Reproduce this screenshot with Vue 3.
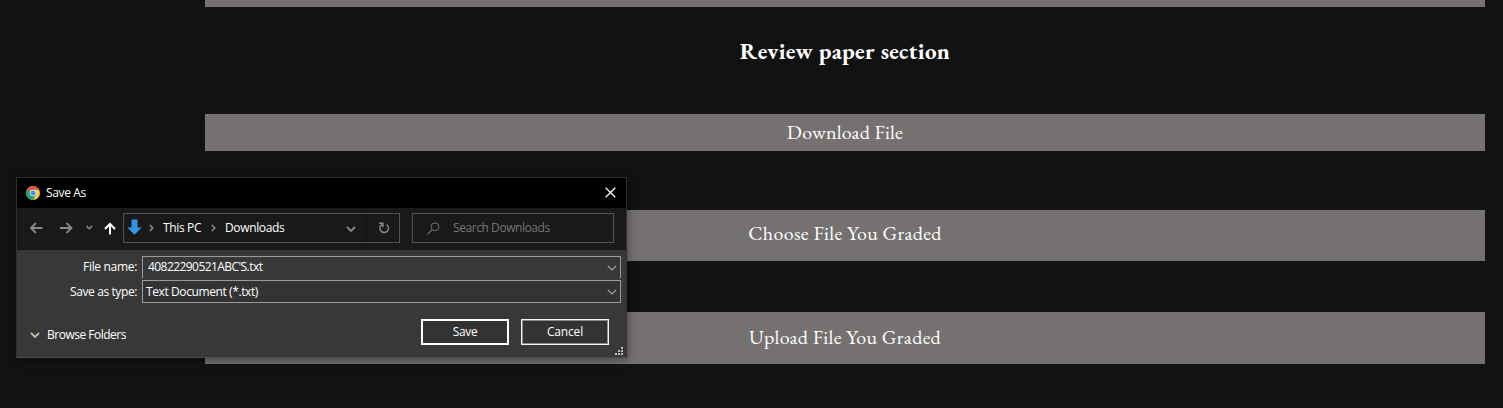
<script setup>
const crumbs = ['This PC', 'Downloads']
</script>

<template>
  <div class="page">
    <main class="column">
      <div class="bar top"></div>
      <h2 class="heading"><span>Review paper section</span></h2>
      <button class="bar download"><span>Download File</span></button>
      <button class="bar choose"><span>Choose File You Graded</span></button>
      <button class="bar upload"><span>Upload File You Graded</span></button>
    </main>

    <section class="dialog">
      <header class="titlebar">
        <svg class="chrome" width="14" height="14" viewBox="0 0 14 14">
          <circle cx="7" cy="7" r="7" fill="#f7ca45" />
          <path d="M7 7 .94 3.5A7 7 0 0 0 7 14l3-5.2z" fill="#1da462" />
          <path d="M7 7 .94 3.5A7 7 0 0 1 13.06 3.7H7z" fill="#dd5144" />
          <circle cx="7" cy="7" r="3.3" fill="#f1f1f1" />
          <circle cx="7" cy="7" r="2.6" fill="#4c8bf5" />
        </svg>
        <span class="title">Save As</span>
        <svg class="close" width="11" height="11" viewBox="0 0 11 11"><path d="M.7.7l9.6 9.6M10.3.7.7 10.3" stroke="#fff" stroke-width="1.3" /></svg>
      </header>

      <nav class="toolbar">
        <div class="arrows">
          <svg width="106" height="30" viewBox="0 0 106 30" fill="none">
            <path d="M14 15h11.5M19 10l-5 5 5 5" stroke="#8a8a8a" stroke-width="1.8" />
            <path d="M43 15h11.5M49.5 10l5 5-5 5" stroke="#8a8a8a" stroke-width="1.8" />
            <path d="M69.5 13l2.8 2.8 2.8-2.8" stroke="#777" stroke-width="1.8" />
            <path d="M93 21.5V11M88 16l5-5 5 5" stroke="#fff" stroke-width="2" />
          </svg>
        </div>
        <div class="address">
          <svg class="down" width="15" height="16" viewBox="0 0 15 16"><path d="M4.5.5h6v8h4.3L7.5 15.8.2 8.5h4.3z" fill="#3394e5" /></svg>
          <template v-for="(crumb, i) in crumbs" :key="crumb">
            <svg class="sep" width="5" height="8" viewBox="0 0 5 8" fill="none"><path d="M.8 1l3 3-3 3" stroke="#8c8c8c" stroke-width="1.6" /></svg>
            <span :class="['crumb', 'crumb-' + i]">{{ crumb }}</span>
          </template>
          <svg class="drop" width="10" height="7" viewBox="0 0 10 7" fill="none"><path d="M1 1l4 4 4-4" stroke="#888" stroke-width="1.9" /></svg>
          <div class="refresh">
            <svg width="12" height="12" viewBox="0 0 12 12" fill="none"><path d="M8.6 2.6A4.3 4.3 0 1 1 2.6 3.8L4.6 2M1 1.3h3.9v3.9" stroke="#858585" stroke-width="1.6" /></svg>
          </div>
        </div>
        <div class="search">
          <svg width="13" height="13" viewBox="0 0 13 13" fill="none"><circle cx="8" cy="4.8" r="3.9" stroke="#767676" /><path d="M5.2 7.6.5 12.3" stroke="#767676" stroke-width="1.2" /></svg>
          <span class="placeholder">Search Downloads</span>
        </div>
      </nav>

      <div class="body">
        <div class="row">
          <label><span class="l-name">File name:</span></label>
          <div class="field name"><span class="v-name">40822290521ABC'S.txt</span>
            <svg width="10" height="6" viewBox="0 0 10 6" fill="none"><path d="M.8.8 5 5 9.2.8" stroke="#aaa" stroke-width="1.2" /></svg>
          </div>
        </div>
        <div class="row second">
          <label><span class="l-type">Save as type:</span></label>
          <div class="field type"><span class="v-type">Text Document (*.txt)</span>
            <svg width="10" height="6" viewBox="0 0 10 6" fill="none"><path d="M.8.8 5 5 9.2.8" stroke="#aaa" stroke-width="1.2" /></svg>
          </div>
        </div>
        <footer class="actions">
          <div class="browse">
            <svg width="10" height="7" viewBox="0 0 10 7" fill="none"><path d="M1 1l4 4 4-4" stroke="#bbb" stroke-width="1.8" /></svg>
            <span class="b-text">Browse Folders</span>
          </div>
          <button class="btn save"><span>Save</span></button>
          <button class="btn cancel"><span>Cancel</span></button>
        </footer>
        <svg class="grip" width="8" height="8" viewBox="0 0 8 8" fill="#bdbdbd"><path d="M6 0h2v2H6zM3 3h2v2H3zM6 3h2v2H6zM0 6h2v2H0zM3 6h2v2H3zM6 6h2v2H6z" /></svg>
      </div>
    </section>
  </div>
</template>

<style>
html, body { background: #121212; overflow: hidden; }
</style>

<style scoped>
* { box-sizing: border-box; }
svg { flex-shrink: 0; }
.page { position: relative; height: 408px; overflow: hidden; background: #121212; color: #fff; }
.column { width: 1280px; margin-left: 205px; display: flex; flex-direction: column; font-family: "EB Garamond", Garamond, "Liberation Serif", serif; }
.bar { display: flex; align-items: center; justify-content: center; width: 100%; padding: 0; border: 0; background: #757170; color: #fff; font: inherit; font-size: 20px; line-height: 24px; letter-spacing: .37px; }
.top { height: 7px; }
.heading { margin: 0; height: 107px; padding-top: 30px; font-size: 23px; line-height: 28px; letter-spacing: .32px; text-align: center; white-space: nowrap; }
.bar span, .heading span { display: inline-block; }
.download { height: 37px; padding-bottom: 1px; letter-spacing: .25px; }
.choose { height: 51px; margin-top: 59px; padding-bottom: 5px; }
.upload { height: 52px; margin-top: 51px; padding-bottom: 2px; }

.dialog { position: absolute; left: 16px; top: 177px; width: 611px; height: 181px; display: flex; flex-direction: column; border: 1px solid #303030; border-bottom-color: #4a4a4a; background: #383838; box-shadow: 1px 2px 8px rgba(0, 0, 0, .4); font-family: "Open Sans", "Noto Sans", sans-serif; font-size: 12px; line-height: 16px; white-space: nowrap; }
.titlebar { height: 30px; display: flex; align-items: center; padding: 0 10px 1px 9px; background: #000; }
.title { margin-left: 6px; letter-spacing: -.35px; }
.close { margin-left: auto; }
.toolbar { height: 42px; display: flex; align-items: flex-start; padding-top: 5px; background: #191919; }
.arrows { width: 106px; height: 30px; }
.address { width: 277px; height: 30px; display: flex; align-items: center; border: 1px solid #535353; padding-left: 3px; }
.down { margin-bottom: 2px; }
.sep { margin-left: 7px; }
.crumb { margin-left: 9px; letter-spacing: -.35px; }
.crumb-0 { width: 41px; }
.drop { margin-left: auto; margin-right: 10px; margin-top: 2px; }
.refresh { width: 33px; height: 28px; display: flex; align-items: center; justify-content: center; border-left: 1px solid #111; padding-left: 1px; }
.search { margin-left: 12px; width: 202px; height: 30px; display: flex; align-items: center; padding-left: 14px; border: 1px solid #535353; color: #777; }
.placeholder { margin-left: 13px; letter-spacing: -.43px; }
.body { position: relative; flex: 1; padding-top: 6px; }
.row { display: flex; height: 22px; }
.second { margin-top: 2px; height: 23px; }
label { width: 125px; padding-right: 5px; text-align: right; line-height: 22px; letter-spacing: -.32px; }
.second label { line-height: 24px; letter-spacing: -.4px; }
.field { width: 479px; display: flex; align-items: center; justify-content: space-between; padding: 0 3px 0 5px; border: 1px solid #9b9b9b; background: #383838; }
.name { border-bottom: 0; }
.v-name { letter-spacing: -.56px; margin-bottom: 1px; }
.v-type { letter-spacing: -.4px; }
.type { padding-left: 3px; background: #333; }
.actions { display: flex; margin-top: 16px; height: 26px; }
.browse { width: 404px; display: flex; align-items: center; padding: 6px 0 0 13px; }
.b-text { margin-left: 7px; letter-spacing: -.5px; }
.btn { width: 88px; height: 26px; padding: 0; border: 2px solid #fff; background: #333; color: #fff; font: inherit; letter-spacing: -.35px; }
.cancel { margin-left: 12px; border: 1px solid #f4f4f4; box-shadow: inset 0 0 0 1px #8d8d8d; letter-spacing: -.15px; }
.grip { position: absolute; right: 3px; bottom: 2px; }
</style>
